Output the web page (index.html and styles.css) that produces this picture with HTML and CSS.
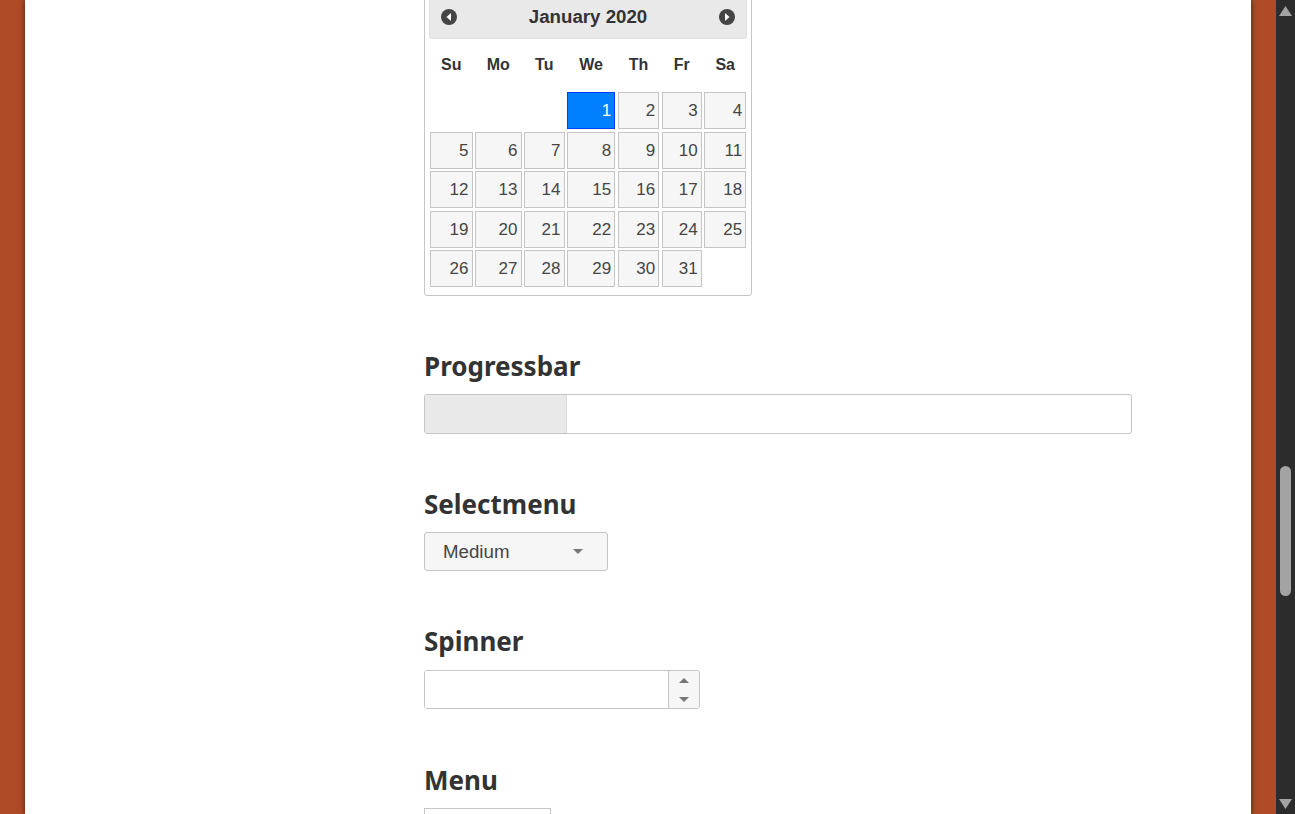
FILE: index.html
```html
<!DOCTYPE HTML>
<html>
  <head>
    <meta http-equiv="content-type" content="text/html; charset=utf-8">
    <title>Widgets</title>
    <link rel="stylesheet" href="styles.css">
  </head>
  <body>
    <div class="backdrop">
      <main class="sheet">
        <div class="calendar">
          <div class="cal-head">
            <svg class="cal-nav" viewBox="0 0 16 16"><circle cx="8" cy="8" r="8" fill="#454545"/><path d="M10 4v8L5.500 8z" fill="#fff"/></svg>
            <span class="cal-title">January 2020</span>
            <svg class="cal-nav" viewBox="0 0 16 16"><circle cx="8" cy="8" r="8" fill="#454545"/><path d="M6 4v8l4.500-4z" fill="#fff"/></svg>
          </div>
          <div class="cal-week">
            <span>Su</span><span>Mo</span><span>Tu</span><span>We</span><span>Th</span><span>Fr</span><span>Sa</span>
          </div>
          <div class="cal-days">
            <a class="day first active">1</a><a class="day">2</a><a class="day">3</a><a class="day">4</a>
            <a class="day">5</a><a class="day">6</a><a class="day">7</a><a class="day">8</a><a class="day">9</a><a class="day">10</a><a class="day">11</a>
            <a class="day">12</a><a class="day">13</a><a class="day">14</a><a class="day">15</a><a class="day">16</a><a class="day">17</a><a class="day">18</a>
            <a class="day">19</a><a class="day">20</a><a class="day">21</a><a class="day">22</a><a class="day">23</a><a class="day">24</a><a class="day">25</a>
            <a class="day">26</a><a class="day">27</a><a class="day">28</a><a class="day">29</a><a class="day">30</a><a class="day">31</a>
          </div>
        </div>

        <h2 class="progress-title">Progressbar</h2>
        <div class="progress"><div class="progress-value"></div></div>

        <h2 class="select-title">Selectmenu</h2>
        <div class="select">
          <span>Medium</span>
          <i class="arrow-down"></i>
        </div>

        <h2 class="spinner-title">Spinner</h2>
        <div class="spinner">
          <div class="spinner-input"></div>
          <div class="spinner-btns">
            <i class="arrow-up"></i>
            <i class="arrow-down"></i>
          </div>
        </div>

        <h2 class="menu-title">Menu</h2>
        <div class="menu"></div>
      </main>
    </div>
    <div class="scrollbar">
      <svg class="scroll-arrow" viewBox="0 0 13 10"><path d="M6.500 0L13 10H0z" fill="#a3a3a3"/></svg>
      <div class="scroll-thumb"></div>
      <svg class="scroll-arrow scroll-arrow-end" viewBox="0 0 13 10"><path d="M0 0h13L6.500 10z" fill="#a3a3a3"/></svg>
    </div>
  </body>
</html>
```

FILE: styles.css
```css
html, body{margin:0; padding:0; height:814px; overflow:hidden;}
body{display:flex; font-family:"Liberation Sans", Arial, sans-serif; color:#333;}

.backdrop{flex:1; height:814px; padding:0 25px; background:#b04b27; overflow:hidden;}
.sheet{height:814px; padding-left:399px; background:#fff; box-shadow:0 0 6px rgba(0,0,0,.6); overflow:hidden;}

/* calendar, scrolled part way off the top */
.calendar{box-sizing:border-box; width:328px; height:306px; margin-top:-10px; padding:4px; background:#fff; border:1px solid #c5c5c5; border-radius:3px;}
.cal-head{box-sizing:border-box; display:flex; align-items:center; justify-content:space-between; height:44px; padding:0 11px; background:#e9e9e9; border:1px solid #ddd; border-radius:3px;}
.cal-title{font-size:18.7px; font-weight:bold;}
.cal-nav{width:16px; height:16px;}
.cal-week{display:grid; grid-template-columns:42.5px 46.5px 40.5px 48.2px 41.5px 40px 42px; column-gap:2.5px; margin:13px 0 0 1px; font-size:16px; font-weight:bold; line-height:26px; text-align:center;}
.cal-days{display:grid; grid-template-columns:42.5px 46.5px 40.5px 48.2px 41.5px 40px 42px; grid-auto-rows:37px; gap:2.5px; margin:14px 0 0 1px;}
.day{box-sizing:border-box; padding-right:3px; background:#f6f6f6; border:1px solid #c5c5c5; color:#454545; font-size:17px; line-height:35px; text-align:right;}
.day.first{grid-column-start:4;}
.day.active{background:#007fff; border-color:#003eff; color:#fff;}

h2{margin:0; font-family:"Noto Sans", sans-serif; font-size:26px; font-weight:bold; line-height:34px; color:#333;}
.progress-title{margin-top:53px;}
.select-title{margin-top:53px;}
.spinner-title{margin-top:53px;}
.menu-title{margin-top:54px;}

.progress{box-sizing:border-box; width:708px; height:40px; margin-top:11px; background:#fff; border:1px solid #c5c5c5; border-radius:3px; overflow:hidden;}
.progress-value{width:20%; height:100%; background:#e9e9e9; border-right:1px solid #ddd;}

.select{box-sizing:border-box; display:flex; align-items:center; justify-content:space-between; width:184px; height:39px; margin-top:11px; padding:0 24px 0 18px; background:#f6f6f6; border:1px solid #c5c5c5; border-radius:3px; color:#454545; font-size:18.7px;}

.spinner{box-sizing:border-box; display:flex; width:276px; height:39px; margin-top:12px; border:1px solid #c5c5c5; border-radius:3px; overflow:hidden;}
.spinner-input{flex:1; background:#fff;}
.spinner-btns{display:flex; flex-direction:column; align-items:center; justify-content:center; gap:14px; width:30px; background:#f6f6f6; border-left:1px solid #c5c5c5;}

.arrow-down{display:block; width:0; height:0; border-left:5px solid transparent; border-right:5px solid transparent; border-top:5px solid #777;}
.arrow-up{display:block; width:0; height:0; border-left:5px solid transparent; border-right:5px solid transparent; border-bottom:5px solid #777;}

.menu{box-sizing:border-box; width:127px; height:60px; margin-top:11px; border:1px solid #c5c5c5;}

.scrollbar{display:flex; flex-direction:column; align-items:center; width:19px; height:814px; background:#2c2c2c;}
.scroll-arrow{flex:none; width:13px; height:10px; margin-top:6px;}
.scroll-arrow-end{margin-top:auto; margin-bottom:5px;}
.scroll-thumb{flex:none; width:11px; height:130px; margin-top:450px; background:#a3a3a3; border-radius:6px;}
```
